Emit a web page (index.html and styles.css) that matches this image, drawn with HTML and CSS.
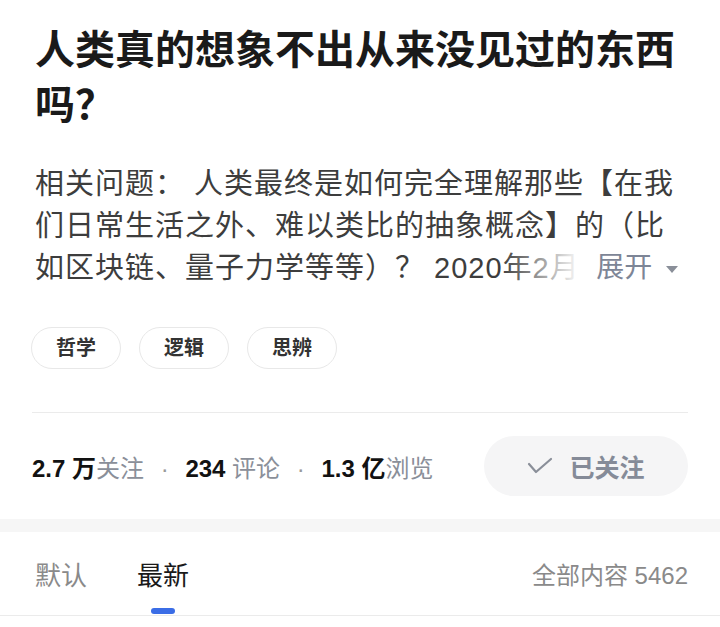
FILE: index.html
```html
<!DOCTYPE html>
<html lang="zh-CN">
<head>
    <meta charset="UTF-8">
    <meta name="viewport" content="width=device-width, initial-scale=1.0">
    <title>人类真的想象不出从来没见过的东西吗？</title>
    <link rel="stylesheet" href="styles.css">
</head>
<body>
    <main class="question">
        <h1 class="title">人类真的想象不出从来没见过的东西吗？</h1>

        <div class="detail">
            <p class="detail-text">相关问题： 人类最终是如何完全理解那些【在我们日常生活之外、难以类比的抽象概念】的（比如区块链、量子力学等等）？ 2020年2月</p>
            <span class="expand">展开 <i class="caret"></i></span>
        </div>

        <div class="tags">
            <span class="tag">哲学</span>
            <span class="tag">逻辑</span>
            <span class="tag">思辨</span>
        </div>

        <div class="stats">
            <div class="counts">
                <span class="num">2.7 万</span><span class="label">关注</span>
                <span class="dot">·</span>
                <span class="num">234</span><span class="label"> 评论</span>
                <span class="dot">·</span>
                <span class="num">1.3 亿</span><span class="label">浏览</span>
            </div>
            <button class="follow-btn">
                <svg class="check" width="26" height="18" viewBox="0 0 26 18">
                    <polyline points="2,7 9,15 24,2" fill="none" stroke="#8a8f99" stroke-width="2.2" stroke-linecap="round" stroke-linejoin="round"/>
                </svg>
                已关注
            </button>
        </div>
    </main>

    <div class="gap"></div>

    <nav class="tabs">
        <div class="tab-list">
            <span class="tab">默认</span>
            <span class="tab active">最新</span>
        </div>
        <span class="total">全部内容 5462</span>
    </nav>
</body>
</html>
```

FILE: styles.css
```css
* {
    margin: 0;
    padding: 0;
    box-sizing: border-box;
}

body {
    background-color: #fff;
    font-family: "Liberation Sans", "Noto Sans CJK SC", sans-serif;
    color: #121212;
}

.question {
    padding: 23px 32px 0 35px;
}

.title {
    font-size: 40px;
    line-height: 55px;
    font-weight: bold;
    color: #1a1a1a;
}

.detail {
    position: relative;
    margin-top: 30px;
}

.detail-text {
    font-size: 29px;
    line-height: 42px;
    letter-spacing: 1px;
    color: #3d3d3d;
    display: -webkit-box;
    -webkit-line-clamp: 3;
    -webkit-box-orient: vertical;
    overflow: hidden;
}

.expand {
    position: absolute;
    right: 0;
    bottom: 0;
    height: 42px;
    line-height: 42px;
    padding-left: 95px;
    padding-right: 10px;
    font-size: 28px;
    color: #7d8596;
    background: linear-gradient(to right, rgba(255, 255, 255, 0), #fff 80px);
}

.caret {
    display: inline-block;
    width: 0;
    height: 0;
    margin-left: 6px;
    vertical-align: middle;
    border-left: 6px solid transparent;
    border-right: 6px solid transparent;
    border-top: 7px solid #8a8f99;
}

.tags {
    display: flex;
    gap: 18px;
    margin-top: 38px;
    margin-left: -4px;
}

.tag {
    width: 90px;
    height: 42px;
    line-height: 40px;
    text-align: center;
    border: 1px solid #e8e8e8;
    border-radius: 21px;
    font-size: 20px;
    font-weight: bold;
    color: #333;
}

.stats {
    display: flex;
    align-items: center;
    justify-content: space-between;
    margin-top: 43px;
    margin-left: -3px;
    padding-top: 23px;
    border-top: 1px solid #ebebeb;
}

.counts {
    font-size: 24px;
}

.num {
    font-weight: bold;
    color: #121212;
}

.label {
    color: #8a8f99;
}

.dot {
    color: #999;
    margin: 0 10px;
}

.follow-btn {
    display: flex;
    align-items: center;
    justify-content: center;
    gap: 16px;
    width: 204px;
    height: 60px;
    border: none;
    border-radius: 30px;
    background-color: #f5f5f6;
    font-family: inherit;
    font-size: 25px;
    font-weight: bold;
    color: #858b98;
}

.gap {
    height: 13px;
    margin-top: 23px;
    background-color: #f6f6f6;
}

.tabs {
    display: flex;
    align-items: center;
    justify-content: space-between;
    height: 84px;
    padding: 0 32px 0 35px;
    border-bottom: 1px solid #ebebeb;
}

.tab-list {
    display: flex;
    gap: 50px;
    height: 100%;
}

.tab {
    position: relative;
    display: flex;
    align-items: center;
    font-size: 26px;
    color: #8a8a8a;
}

.tab.active {
    color: #1a1a1a;
}

.tab.active::after {
    content: "";
    position: absolute;
    left: 50%;
    bottom: 1px;
    width: 24px;
    height: 6px;
    margin-left: -12px;
    border-radius: 3px;
    background-color: #3b6de6;
}

.total {
    font-size: 24px;
    color: #8a8a8a;
}
```
